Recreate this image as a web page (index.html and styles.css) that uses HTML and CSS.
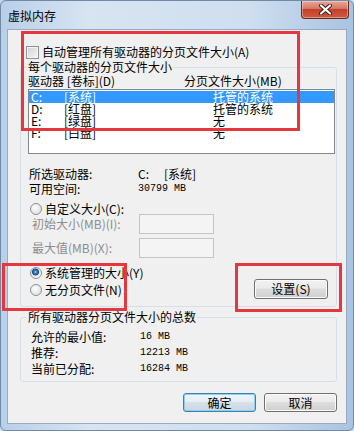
FILE: index.html
```html
<!DOCTYPE html>
<html lang="zh-CN">
<head>
  <meta charset="UTF-8">
  <title>虚拟内存</title>
  <link rel="stylesheet" href="styles.css">
</head>
<body>

<div class="window">
  <div class="titlebar">
    <span class="title">虚拟内存</span>
    <button class="close" type="button">
      <svg width="13" height="11" viewBox="0 0 13 11">
        <path d="M2 1.5 L11 9.5 M11 1.5 L2 9.5" stroke="#3a1c16" stroke-width="4" stroke-linecap="round"/>
        <path d="M2 1.5 L11 9.5 M11 1.5 L2 9.5" stroke="#fff" stroke-width="2.2" stroke-linecap="round"/>
      </svg>
    </button>
  </div>

  <div class="client">
    <label class="auto"><span class="checkbox"></span>自动管理所有驱动器的分页文件大小(A)</label>

    <fieldset class="group drives">
      <legend>每个驱动器的分页文件大小</legend>
      <div class="cols"><span>驱动器 [卷标](D)</span><span>分页文件大小(MB)</span></div>
      <div class="listbox">
        <div class="item selected"><span>C:</span><span>[系统]</span><span>托管的系统</span></div>
        <div class="item"><span>D:</span><span>[红盘]</span><span>托管的系统</span></div>
        <div class="item"><span>E:</span><span>[绿盘]</span><span>无</span></div>
        <div class="item"><span>F:</span><span>[白盘]</span><span>无</span></div>
      </div>

      <div class="info">
        <span>所选驱动器:</span><span><span class="drive">C:</span>[系统]</span>
        <span>可用空间:</span><span class="mono">30799 MB</span>
      </div>

      <div class="option"><span class="radio"></span>自定义大小(C):</div>
      <div class="sizes">
        <span>初始大小(MB)(I):</span><span class="field"></span>
        <span>最大值(MB)(X):</span><span class="field"></span>
      </div>

      <div class="bottom">
        <div class="radios">
          <div class="option"><span class="radio on"></span>系统管理的大小(Y)</div>
          <div class="option"><span class="radio"></span>无分页文件(N)</div>
        </div>
        <button class="btn set" type="button">设置(S)</button>
      </div>
    </fieldset>

    <fieldset class="group totals">
      <legend>所有驱动器分页文件大小的总数</legend>
      <div class="sum">
        <span>允许的最小值:</span><span class="mono">16 MB</span>
        <span>推荐:</span><span class="mono">12213 MB</span>
        <span>当前已分配:</span><span class="mono">16284 MB</span>
      </div>
    </fieldset>

    <div class="actions">
      <button class="btn default" type="button">确定</button>
      <button class="btn" type="button">取消</button>
    </div>
  </div>

  <div class="mark mark-top"></div>
  <div class="mark mark-radio"></div>
  <div class="mark mark-set"></div>
</div>

</body>
</html>
```

FILE: styles.css
```css
body { margin: 0; font: 12px/12px "Noto Sans CJK SC", sans-serif; color: #000; background: #c4d7ec; }

.window {
  position: relative; width: 354px; height: 431px; box-sizing: border-box;
  border: 1px solid #6f8aa9; border-radius: 6px; overflow: hidden;
  display: flex; flex-direction: column;
  background: linear-gradient(to right, #b9cfe8, #d7e4f2 25%, #cfdff0 70%, #a9c3e1);
}

.titlebar { display: flex; align-items: flex-start; height: 28px; }
.title { padding: 9px 0 0 7px; color: #000; }
.close {
  margin-left: auto; margin-right: 4px; width: 48px; height: 18px; padding: 0;
  border: 1px solid #6b2a20; border-top: none; border-radius: 0 0 4px 4px;
  background: linear-gradient(#e7a99b, #d67662 45%, #c2402b 50%, #cf5a40);
  box-shadow: inset 0 0 0 1px rgba(255,255,255,0.35);
  display: flex; align-items: center; justify-content: center;
}

.client {
  flex: 1; margin: 0 6px 6px 6px; border: 1px solid #98abc2;
  background: #f0f0f0; display: flex; flex-direction: column;
}

.auto { display: flex; align-items: center; margin: 15px 0 0 18px; line-height: 14px; }
.checkbox {
  width: 13px; height: 13px; box-sizing: border-box; margin-right: 3px;
  border: 1px solid #8e8f8f; background: linear-gradient(135deg, #d2d2d2, #f6f6f6);
  box-shadow: inset 0 0 0 1px #f4f4f4;
}

.group { border: 1px solid #d5dfe5; border-radius: 3px; padding: 0; min-width: 0; }
.group legend { margin-left: 6px; padding: 0 1px; line-height: 12px; }

.drives { margin: 2px 9px 0 12px; padding-bottom: 9px; }
.cols { display: grid; grid-template-columns: 156px auto; margin: 2px 0 0 7px; }

.listbox {
  margin: 2px 0 0 7px; width: 307px; height: 65px; box-sizing: border-box;
  border: 1px solid #828790; background: #fff; padding: 1px 0;
}
.item { display: grid; grid-template-columns: 33px 149px auto; padding-left: 2px; height: 12px; }
.item.selected { background: #3399ff; color: #fff; }

.info { display: grid; grid-template-columns: 109px auto; margin: 12px 0 0 8px; line-height: 15px; }
.drive { display: inline-block; width: 26px; }
.mono { font-family: "Liberation Mono", monospace; font-size: 10px; }

.option { display: flex; align-items: center; line-height: 14px; }
.drives > .option { margin: 6px 0 0 9px; }
.radio {
  width: 12px; height: 12px; box-sizing: border-box; margin-right: 3px; border-radius: 50%;
  border: 1px solid #8e8f8f; background: radial-gradient(circle at 40% 35%, #fdfdfd, #d9d9d9);
}
.radio.on {
  background: radial-gradient(circle at 45% 40%, #a8d6f7 0, #2f77c2 1.6px, #184f8c 3.2px, #e2e2e2 3.8px, #fafafa 6px);
}

.sizes {
  display: grid; grid-template-columns: 107px 75px; grid-auto-rows: 16px; row-gap: 8px;
  align-items: center; margin: 0 0 0 11px; color: #8d8d8d;
}
.field { height: 20px; box-sizing: border-box; border: 1px solid #c4c4c4; background: #f4f4f4; }

.bottom { display: flex; align-items: flex-end; margin: 10px 0 0 9px; }
.radios { display: flex; flex-direction: column; gap: 3px; }

.btn {
  width: 73px; height: 19px; padding: 0; font: inherit; color: #000;
  border: 1px solid #707070; border-radius: 3px;
  background: linear-gradient(#f2f2f2, #ebebeb 45%, #dddddd 50%, #cfcfcf);
  box-shadow: inset 0 0 0 1px #fbfbfb;
}
.btn.set { margin: 0 8px -2px auto; width: 74px; height: 20px; }
.btn.default {
  border-color: #3c7fb1;
  background: linear-gradient(#f0f6fa, #e6eef4 45%, #d6e1ea 50%, #cbd7e1);
  box-shadow: inset 0 0 0 1px #8fd0f2;
}

.totals { margin: 4px 9px 0 12px; padding-bottom: 4px; }
.sum { display: grid; grid-template-columns: 109px auto; grid-auto-rows: 16px; align-items: center; margin: 6px 0 0 10px; }

.actions { display: flex; justify-content: flex-end; gap: 8px; margin: 11px 9px 0 0; }

.mark { position: absolute; box-sizing: border-box; border: 3px solid #e5383e; }
.mark-top { left: 20px; top: 30px; width: 279px; height: 100px; }
.mark-radio { left: 1px; top: 262px; width: 125px; height: 48px; }
.mark-set { left: 234px; top: 262px; width: 107px; height: 49px; }
```
